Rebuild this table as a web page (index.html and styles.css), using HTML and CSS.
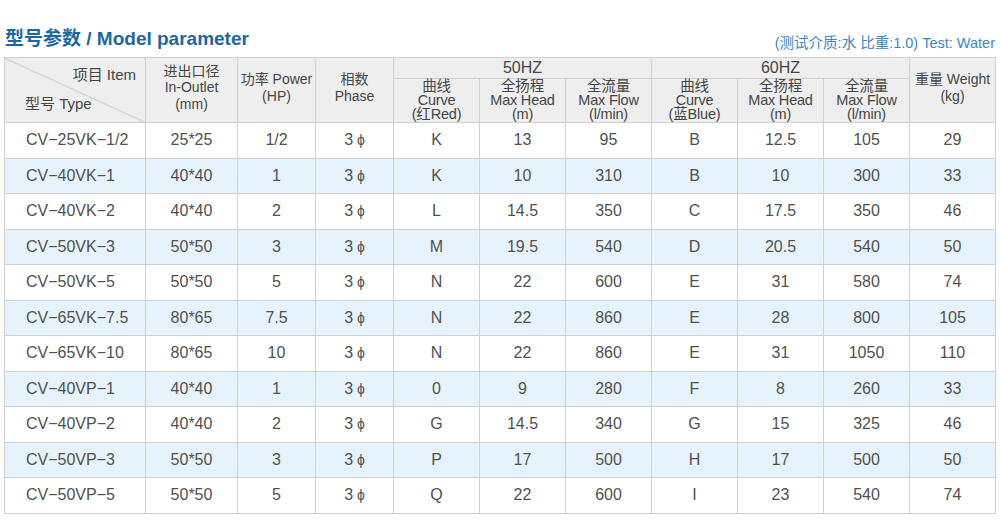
FILE: index.html
```html
<!DOCTYPE html>
<html lang="zh">
<head>
<meta charset="utf-8">
<title>型号参数 / Model parameter</title>
<link rel="stylesheet" href="styles.css">
</head>
<body>
<div class="page">
  <div class="head">
    <h1 class="title">型号参数 / Model parameter</h1>
    <div class="note">(测试介质:水 比重:1.0) Test: Water</div>
  </div>
  <table class="spec">
    <colgroup>
      <col class="c-type"><col class="c-io"><col class="c-pw"><col class="c-ph">
      <col class="c-n"><col class="c-n"><col class="c-n"><col class="c-n"><col class="c-n"><col class="c-n"><col class="c-n">
    </colgroup>
    <thead>
      <tr class="h1">
        <th rowspan="2" class="diag">
          <div class="diag-in"><span class="item">项目 Item</span><span class="type">型号 Type</span></div>
        </th>
        <th rowspan="2" class="tall">进出口径<br>In-Outlet<br>(mm)</th>
        <th rowspan="2" class="tall">功率 Power<br>(HP)</th>
        <th rowspan="2" class="tall">相数<br>Phase</th>
        <th colspan="3" class="hz">50HZ</th>
        <th colspan="3" class="hz">60HZ</th>
        <th rowspan="2" class="tall">重量 Weight<br>(kg)</th>
      </tr>
      <tr class="h2">
        <th class="tight">曲线<br>Curve<br>(红Red)</th>
        <th class="tight">全扬程<br>Max Head<br>(m)</th>
        <th class="tight">全流量<br>Max Flow<br>(l/min)</th>
        <th class="tight">曲线<br>Curve<br>(蓝Blue)</th>
        <th class="tight">全扬程<br>Max Head<br>(m)</th>
        <th class="tight">全流量<br>Max Flow<br>(l/min)</th>
      </tr>
    </thead>
    <tbody>
      <tr><td>CV−25VK−1/2</td><td>25*25</td><td>1/2</td><td>3<span class="phi">ϕ</span></td><td>K</td><td>13</td><td>95</td><td>B</td><td>12.5</td><td>105</td><td>29</td></tr>
      <tr><td>CV−40VK−1</td><td>40*40</td><td>1</td><td>3<span class="phi">ϕ</span></td><td>K</td><td>10</td><td>310</td><td>B</td><td>10</td><td>300</td><td>33</td></tr>
      <tr><td>CV−40VK−2</td><td>40*40</td><td>2</td><td>3<span class="phi">ϕ</span></td><td>L</td><td>14.5</td><td>350</td><td>C</td><td>17.5</td><td>350</td><td>46</td></tr>
      <tr><td>CV−50VK−3</td><td>50*50</td><td>3</td><td>3<span class="phi">ϕ</span></td><td>M</td><td>19.5</td><td>540</td><td>D</td><td>20.5</td><td>540</td><td>50</td></tr>
      <tr><td>CV−50VK−5</td><td>50*50</td><td>5</td><td>3<span class="phi">ϕ</span></td><td>N</td><td>22</td><td>600</td><td>E</td><td>31</td><td>580</td><td>74</td></tr>
      <tr><td>CV−65VK−7.5</td><td>80*65</td><td>7.5</td><td>3<span class="phi">ϕ</span></td><td>N</td><td>22</td><td>860</td><td>E</td><td>28</td><td>800</td><td>105</td></tr>
      <tr><td>CV−65VK−10</td><td>80*65</td><td>10</td><td>3<span class="phi">ϕ</span></td><td>N</td><td>22</td><td>860</td><td>E</td><td>31</td><td>1050</td><td>110</td></tr>
      <tr><td>CV−40VP−1</td><td>40*40</td><td>1</td><td>3<span class="phi">ϕ</span></td><td>0</td><td>9</td><td>280</td><td>F</td><td>8</td><td>260</td><td>33</td></tr>
      <tr><td>CV−40VP−2</td><td>40*40</td><td>2</td><td>3<span class="phi">ϕ</span></td><td>G</td><td>14.5</td><td>340</td><td>G</td><td>15</td><td>325</td><td>46</td></tr>
      <tr><td>CV−50VP−3</td><td>50*50</td><td>3</td><td>3<span class="phi">ϕ</span></td><td>P</td><td>17</td><td>500</td><td>H</td><td>17</td><td>500</td><td>50</td></tr>
      <tr><td>CV−50VP−5</td><td>50*50</td><td>5</td><td>3<span class="phi">ϕ</span></td><td>Q</td><td>22</td><td>600</td><td>I</td><td>23</td><td>540</td><td>74</td></tr>
    </tbody>
  </table>
</div>
</body>
</html>
```

FILE: styles.css
```css
* { box-sizing: border-box; }
html, body {
  margin: 0;
  padding: 0;
  background: #ffffff;
}
body {
  font-family: "Liberation Sans", Arial, "Noto Sans CJK SC", sans-serif;
  color: #4a4a4a;
}
.page {
  width: 1000px;
  padding: 0 5px 0 4px;
}
.head {
  height: 57px;
  display: flex;
  justify-content: space-between;
  align-items: flex-end;
  padding: 0 0 5px 1px;
}
.title {
  margin: 0;
  font-size: 19px;
  font-weight: bold;
  color: #1c67a2;
  line-height: 22px;
  padding-bottom: 2px;
}
.note {
  font-size: 14.5px;
  color: #3d86c6;
  line-height: 16px;
  padding-bottom: 1px;
}
.spec {
  width: 991px;
  border-collapse: collapse;
  table-layout: fixed;
  font-size: 16px;
}
.c-type { width: 141px; }
.c-io { width: 92px; }
.c-pw { width: 78px; }
.c-ph { width: 78px; }
.c-n { width: 86px; }
.spec th, .spec td {
  border: 1px solid #cfd0d2;
  text-align: center;
  padding: 0;
}
.spec th {
  background: #eeeeee;
  font-weight: normal;
  font-size: 14px;
  line-height: 16.5px;
  color: #454545;
}
.spec th.tall { padding-bottom: 5px; }
.h1 th.hz {
  height: 21px;
  font-size: 16px;
  line-height: 18px;
}
.h2 th { height: 44px; }
.spec th.tight {
  font-size: 14.5px;
  line-height: 14px;
  letter-spacing: -0.2px;
  padding-bottom: 1px;
}
.spec th.diag {
  background: linear-gradient(to top right, #eeeeee calc(50% - 0.7px), #b9b9b9 50%, #eeeeee calc(50% + 0.7px));
}
.diag-in {
  display: flex;
  flex-direction: column;
  height: 63px;
  padding: 8px 9px 9px 20px;
  justify-content: space-between;
  font-size: 15px;
}
.diag-in .item { align-self: flex-end; }
.diag-in .type { align-self: flex-start; }
.spec td {
  height: 35.5px;
  font-size: 16px;
  color: #505050;
}
.spec tbody tr:nth-child(even) td { background: #e7f3fc; }
.spec tbody td:first-child {
  text-align: left;
  padding-left: 21px;
}
.phi {
  margin-left: 4px;
  font-size: 14px;
}
```
